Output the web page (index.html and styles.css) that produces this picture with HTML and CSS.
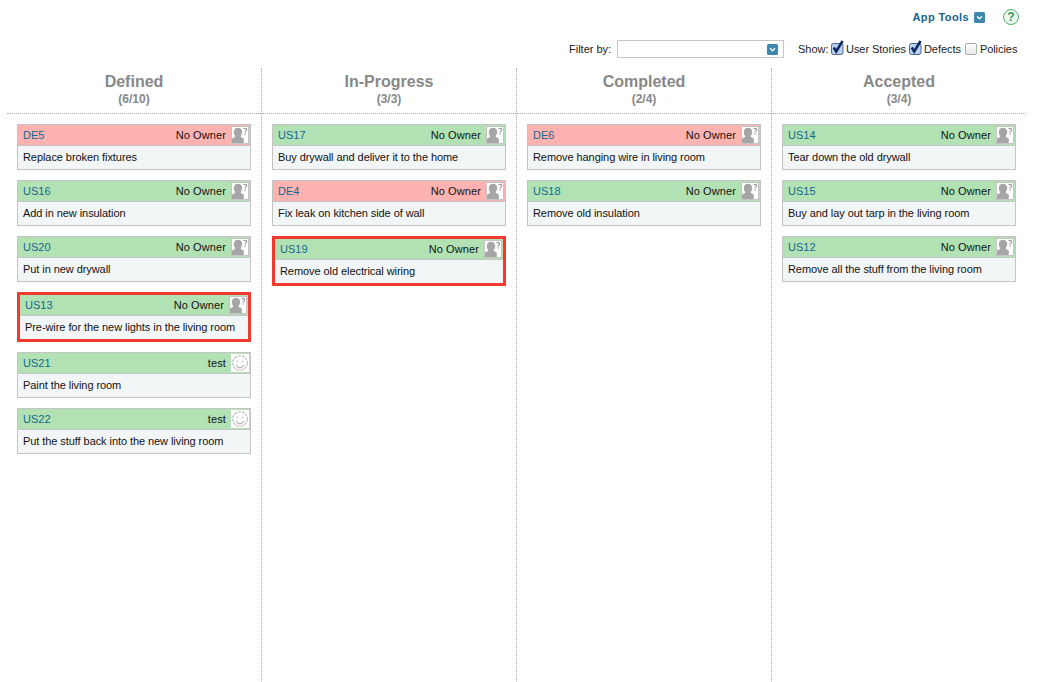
FILE: index.html
```html
<!DOCTYPE html>
<html lang="en">
<head>
<meta charset="utf-8">
<title>Task board</title>
<link rel="stylesheet" href="styles.css">
</head>
<body>
<svg class="defs" width="0" height="0" aria-hidden="true">
  <symbol id="unknown" viewBox="0 0 16 16">
    <path fill="#a6a6a6" d="M6 .8c2.700 0 4.200 1.800 4.200 4.200 0 1.600-.6 2.800-1.400 3.700v1.200c1.300.5 2.600 1 3 2V16H0v-4.100c.4-1 1.700-1.500 3-2V8.700C2.200 7.800 1.800 6.600 1.800 5 1.800 2.600 3.300.8 6 .8z"/>
    <path fill="none" stroke="#999" stroke-width="1.200" d="M11.800 2.200c.3-1 2.700-1.100 2.800.4.100 1.300-1.500 1.300-1.500 2.900"/>
    <rect x="12.500" y="6.300" width="1.200" height="1.300" fill="#999"/>
  </symbol>
  <symbol id="smile" viewBox="0 0 18 18">
    <circle cx="9" cy="9" r="7.300" fill="#fff" stroke="#b5b5b5" stroke-width="1.100" stroke-dasharray="3 1"/>
    <path fill="none" stroke="#b5b5b5" stroke-width="1.100" d="M5.300 7.300h2M10.700 7.300h2M5 11c1 2 2.500 2.800 4 2.800s3-.8 4-2.800"/>
  </symbol>
  <symbol id="check" viewBox="0 0 14 15">
    <rect x="1.500" y="3.500" width="11.500" height="11" rx="2" fill="#bcd0f0" stroke="#4f648f"/>
    <path fill="none" stroke="#0c2a5c" stroke-width="2.500" d="M3.800 7.500l2.400 4L12.600 1"/>
  </symbol>
  <symbol id="chev" viewBox="0 0 11 11">
    <rect width="11" height="11" rx="1.500" fill="#3f87ad"/>
    <path fill="none" stroke="#fff" stroke-width="1.300" d="M3 4.300l2.500 2.500L8 4.300"/>
  </symbol>
</svg>

<header class="tools">
  <a class="app-tools">App Tools</a>
  <svg class="chev"><use href="#chev"/></svg>
  <span class="help">?</span>
</header>

<div class="filters">
  <span class="filter-label">Filter by:</span>
  <div class="filter-box"><svg class="chev"><use href="#chev"/></svg></div>
  <span class="show-label">Show:</span>
  <svg class="tick"><use href="#check"/></svg><span class="opt">User Stories</span>
  <svg class="tick"><use href="#check"/></svg><span class="opt">Defects</span>
  <span class="unticked"></span><span class="opt">Policies</span>
</div>

<main class="board">
  <section class="col">
    <div class="col-head"><h2>Defined</h2><p>(6/10)</p></div>
    <div class="cards">
      <article class="card defect"><div class="card-top"><a>DE5</a><span>No Owner</span><svg class="av"><use href="#unknown"/></svg></div><div class="card-body">Replace broken fixtures</div></article>
      <article class="card story"><div class="card-top"><a>US16</a><span>No Owner</span><svg class="av"><use href="#unknown"/></svg></div><div class="card-body">Add in new insulation</div></article>
      <article class="card story"><div class="card-top"><a>US20</a><span>No Owner</span><svg class="av"><use href="#unknown"/></svg></div><div class="card-body">Put in new drywall</div></article>
      <article class="card story picked"><div class="card-top"><a>US13</a><span>No Owner</span><svg class="av"><use href="#unknown"/></svg></div><div class="card-body">Pre-wire for the new lights in the living room</div></article>
      <article class="card story"><div class="card-top"><a>US21</a><span>test</span><svg class="av plain"><use href="#smile"/></svg></div><div class="card-body">Paint the living room</div></article>
      <article class="card story"><div class="card-top"><a>US22</a><span>test</span><svg class="av plain"><use href="#smile"/></svg></div><div class="card-body">Put the stuff back into the new living room</div></article>
    </div>
  </section>
  <section class="col">
    <div class="col-head"><h2>In-Progress</h2><p>(3/3)</p></div>
    <div class="cards">
      <article class="card story"><div class="card-top"><a>US17</a><span>No Owner</span><svg class="av"><use href="#unknown"/></svg></div><div class="card-body">Buy drywall and deliver it to the home</div></article>
      <article class="card defect"><div class="card-top"><a>DE4</a><span>No Owner</span><svg class="av"><use href="#unknown"/></svg></div><div class="card-body">Fix leak on kitchen side of wall</div></article>
      <article class="card story picked"><div class="card-top"><a>US19</a><span>No Owner</span><svg class="av"><use href="#unknown"/></svg></div><div class="card-body">Remove old electrical wiring</div></article>
    </div>
  </section>
  <section class="col">
    <div class="col-head"><h2>Completed</h2><p>(2/4)</p></div>
    <div class="cards">
      <article class="card defect"><div class="card-top"><a>DE6</a><span>No Owner</span><svg class="av"><use href="#unknown"/></svg></div><div class="card-body">Remove hanging wire in living room</div></article>
      <article class="card story"><div class="card-top"><a>US18</a><span>No Owner</span><svg class="av"><use href="#unknown"/></svg></div><div class="card-body">Remove old insulation</div></article>
    </div>
  </section>
  <section class="col">
    <div class="col-head"><h2>Accepted</h2><p>(3/4)</p></div>
    <div class="cards">
      <article class="card story"><div class="card-top"><a>US14</a><span>No Owner</span><svg class="av"><use href="#unknown"/></svg></div><div class="card-body">Tear down the old drywall</div></article>
      <article class="card story"><div class="card-top"><a>US15</a><span>No Owner</span><svg class="av"><use href="#unknown"/></svg></div><div class="card-body">Buy and lay out tarp in the living room</div></article>
      <article class="card story"><div class="card-top"><a>US12</a><span>No Owner</span><svg class="av"><use href="#unknown"/></svg></div><div class="card-body">Remove all the stuff from the living room</div></article>
    </div>
  </section>
</main>
</body>
</html>
```
FILE: styles.css
```css
* { box-sizing: border-box; }
html, body { margin: 0; height: 100%; }
body {
  background: #fff;
  color: #222;
  font: 11px/13px "Liberation Sans", Arial, sans-serif;
  overflow: hidden;
}
.defs { position: absolute; }
.tools {
  display: flex;
  align-items: center;
  justify-content: flex-end;
  height: 34px;
  padding-right: 26px;
}
.app-tools {
  color: #14668f;
  font-weight: bold;
  letter-spacing: .4px;
  margin-right: 5px;
}
.chev { width: 11px; height: 11px; display: block; flex: none; }
.help {
  width: 16px;
  height: 16px;
  margin-left: 18px;
  border: 1px solid #4fb26c;
  border-radius: 50%;
  color: #2c9a50;
  background: #eef9f0;
  font: bold 12px/14px "Liberation Sans", Arial, sans-serif;
  text-align: center;
}
.filters {
  display: flex;
  align-items: center;
  height: 30px;
  padding-left: 569px;
  white-space: nowrap;
}
.filters > * { flex: none; }
.filter-label { width: 48px; }
.filter-box {
  width: 167px;
  height: 18px;
  margin-right: 14px;
  padding-right: 5px;
  border: 1px solid #c6c6c6;
  display: flex;
  align-items: center;
  justify-content: flex-end;
}
.show-label { width: 32px; }
.tick { width: 14px; height: 15px; margin: -3px 2px 0 0; }
.opt { margin-right: 2px; letter-spacing: -.05px; }
.unticked {
  width: 12px;
  height: 12px;
  margin: 0 3px 0 2px;
  border: 1px solid #aaa;
  border-radius: 2px;
  background: linear-gradient(#fff, #e6e6e6);
}
.board {
  display: flex;
  margin: 4px 0 0 7px;
  height: 614px;
  width: 1019px;
}
.col {
  flex: 0 0 255px;
  border-left: 1px dotted #aaa;
  display: flex;
  flex-direction: column;
}
.col:first-child { flex-basis: 254px; border-left: 0; }
.col-head {
  height: 46px;
  border-bottom: 1px dotted #aaa;
  text-align: center;
  color: #888;
  font-weight: bold;
}
.col-head h2 {
  margin: 5px 0 0;
  font-size: 16px;
  line-height: 18px;
}
.col-head p {
  margin: 2px 0 0;
  font-size: 12px;
  line-height: 13px;
}
.cards {
  display: flex;
  flex-direction: column;
  gap: 10px;
  padding: 10px 10px 0;
}
.card {
  border: 1px solid #c4c4c4;
  background: #f3f6f7;
  height: 46px;
}
.card.picked {
  border: 3px solid #f03a30;
  height: 50px;
}
.card-top {
  height: 21px;
  display: flex;
  align-items: center;
  padding: 0 1px 0 5px;
  border-bottom: 1px solid #c4c4c4;
  color: #111;
}
.story .card-top { background: #b2e2b4; }
.defect .card-top { background: #ffb3b1; }
.card-top a {
  color: #14668f;
  flex: 1;
}
.card-top span { margin-right: 5px; letter-spacing: .1px; }
.av {
  width: 18px;
  height: 18px;
  background: #fff;
  border: 1px solid #c4c4c4;
  display: block;
}
.av.plain { border: 0; }
.card-body {
  padding: 5px 5px 0;
  color: #111;
  letter-spacing: -.07px;
}
```
